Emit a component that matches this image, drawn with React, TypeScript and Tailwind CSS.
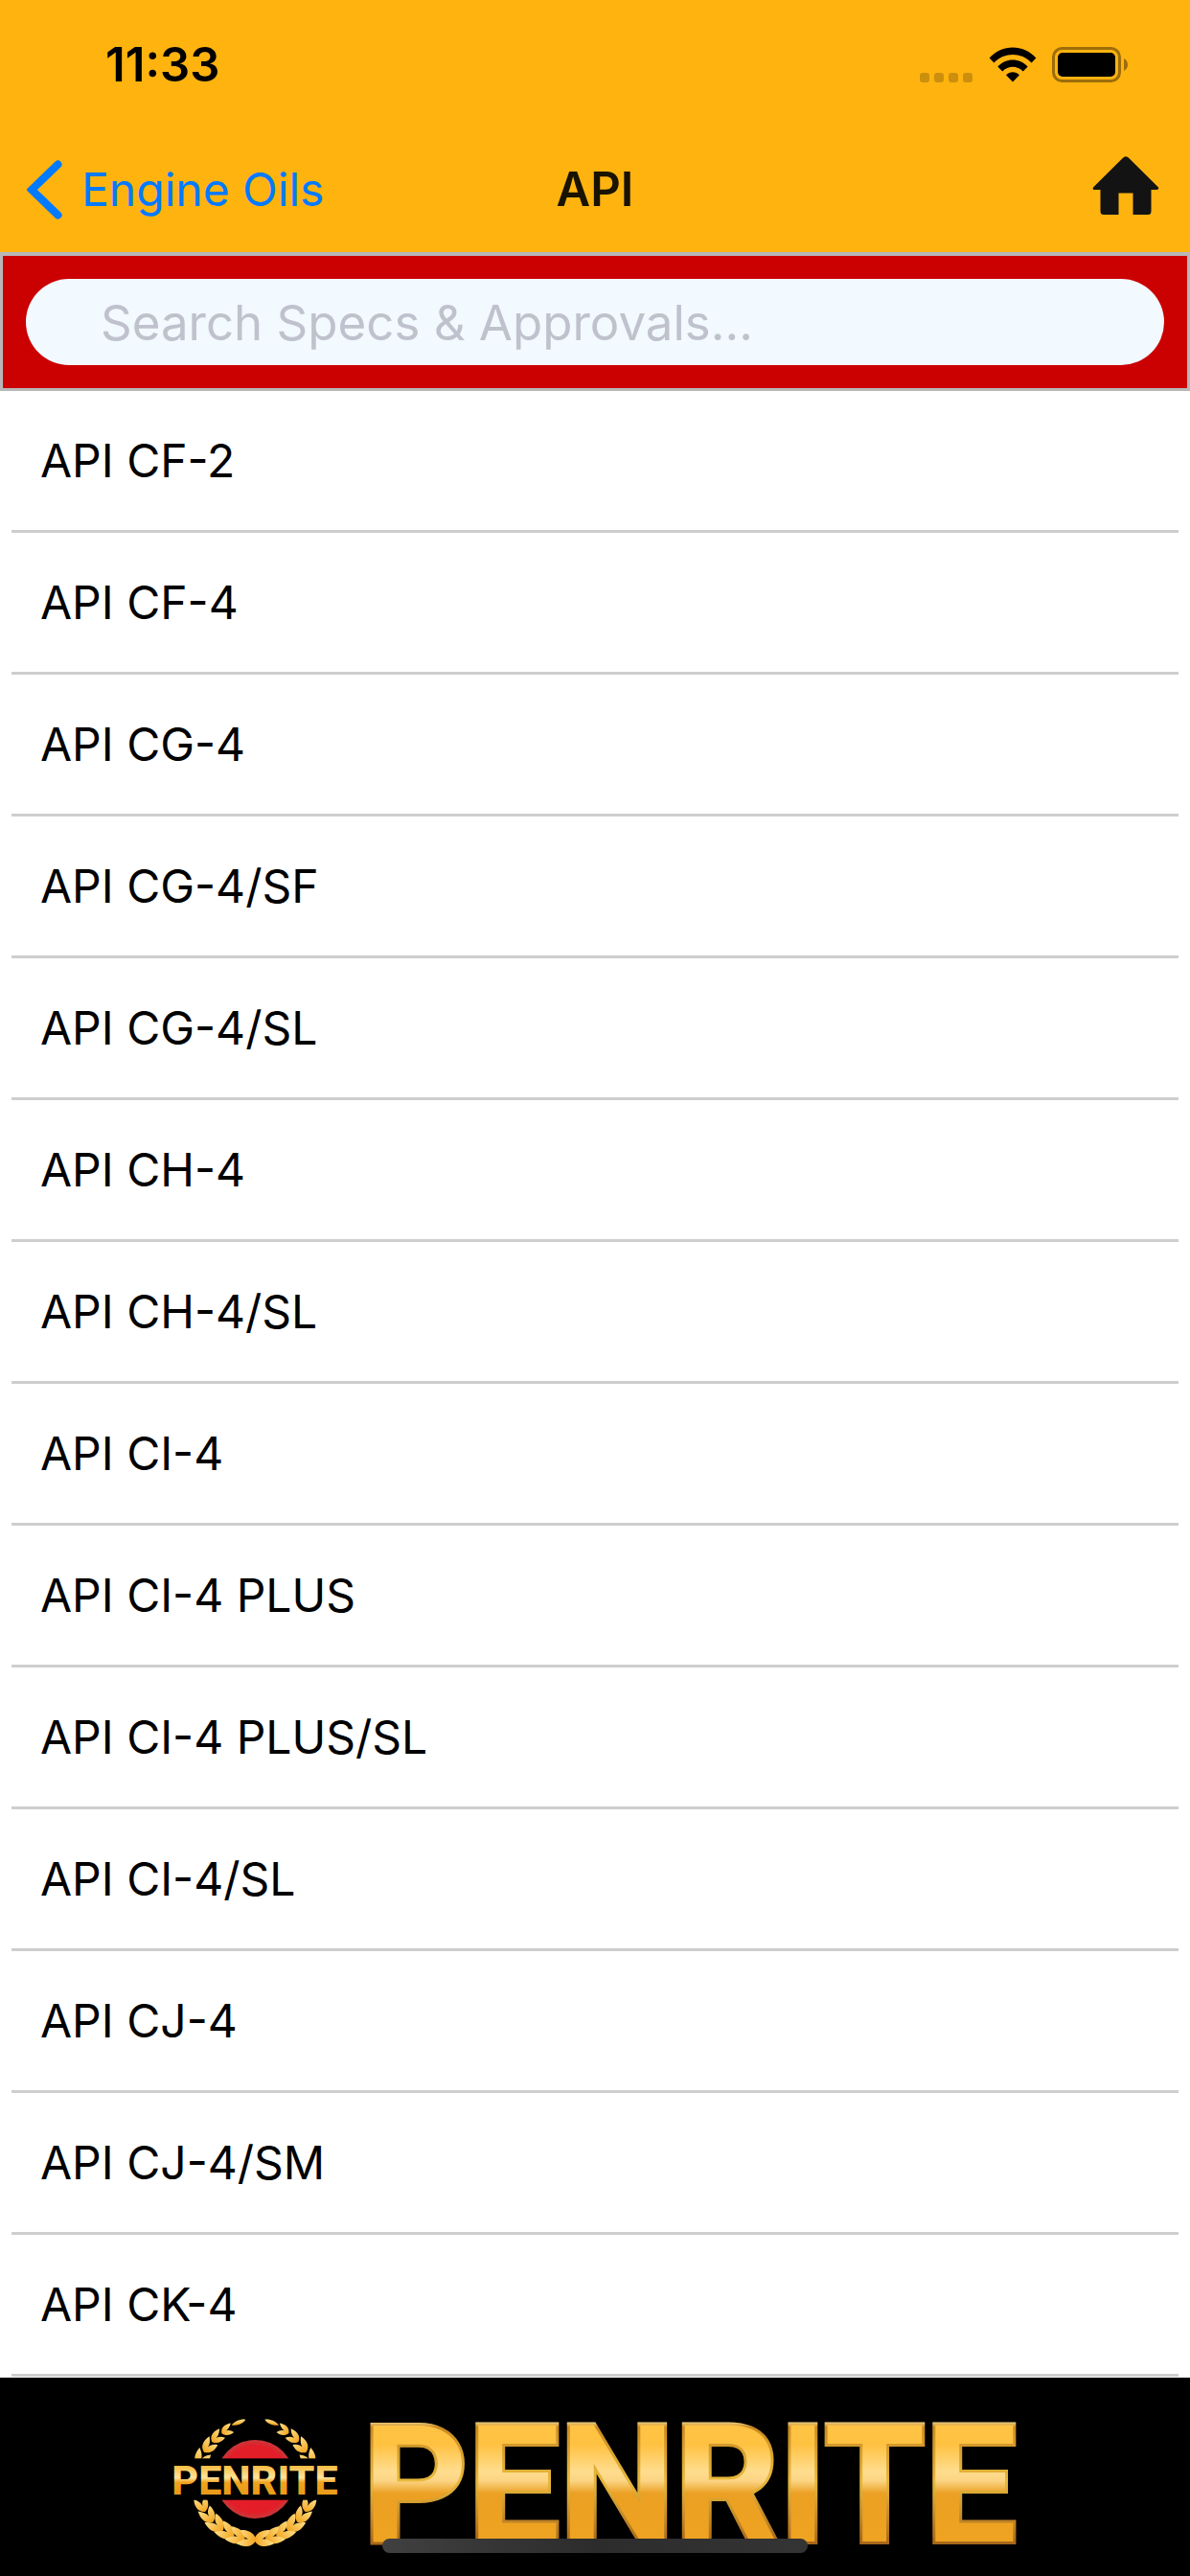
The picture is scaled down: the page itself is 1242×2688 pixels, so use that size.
import React, { useState } from 'react';

const SPECS = [
  'API CF-2',
  'API CF-4',
  'API CG-4',
  'API CG-4/SF',
  'API CG-4/SL',
  'API CH-4',
  'API CH-4/SL',
  'API CI-4',
  'API CI-4 PLUS',
  'API CI-4 PLUS/SL',
  'API CI-4/SL',
  'API CJ-4',
  'API CJ-4/SM',
  'API CK-4',
];

// angle around the wreath (degrees from the top) and leaf size
const LEAVES = [
  { angle: 29, size: 0.8 },
  { angle: 41, size: 0.9 },
  { angle: 53, size: 1 },
  { angle: 67, size: 1.1 },
  { angle: 114, size: 1 },
  { angle: 126, size: 1.1 },
  { angle: 138, size: 1.2 },
  { angle: 150, size: 1.2 },
  { angle: 161, size: 1.2 },
  { angle: 172, size: 1.2 },
];

function StatusBar() {
  return (
    <div className="flex h-[132px] items-center justify-between pt-1 pr-16 pl-[110px]">
      <span className="text-[49px] leading-[60px] font-semibold text-black">11:33</span>
      <div className="flex items-center">
        <svg width="56" height="38" viewBox="0 0 56 38" aria-hidden="true">
          {[0, 15, 30, 45].map(x => (
            <rect key={x} x={x} y="27" width="10" height="10" rx="3" fill="#cc8f0d" />
          ))}
        </svg>
        <svg className="ml-4" width="50" height="38" viewBox="0 0 50 38" aria-hidden="true">
          <path d="M0.6 11.6C14-3.2 36-3.2 49.4 11.6L44.6 16.4C33.5 5.2 16.5 5.2 5.4 16.4Z" />
          <path d="M9.3 20.6C18 11.2 32 11.2 40.7 20.6L35.7 25.4C29.5 19.2 20.5 19.2 14.3 25.4Z" />
          <path d="M18 29.2C21.8 25.2 28.2 25.2 32 29.2L25 36.5Z" />
        </svg>
        <svg className="ml-4" width="80" height="38" viewBox="0 0 80 38" aria-hidden="true">
          <rect x="1.5" y="1.5" width="69" height="34" rx="9" fill="none" stroke="#9c6d09" strokeWidth="3" />
          <rect x="6" y="6" width="60" height="25" rx="5" />
          <path d="M75 12C80.3 14.5 80.3 22.5 75 25Z" fill="#9c6d09" />
        </svg>
      </div>
    </div>
  );
}

function NavBar() {
  return (
    <div className="grid h-[131px] grid-cols-3 items-center px-7">
      <button type="button" className="flex items-center gap-5 justify-self-start text-[#007aff]">
        <svg width="37" height="62" viewBox="0 0 37 62" aria-hidden="true">
          <path d="M32.5 4.5L5 31L32.5 57.5" fill="none" stroke="currentColor" strokeWidth="8" strokeLinecap="round" />
        </svg>
        <span className="text-[48px] leading-[60px] whitespace-nowrap">Engine Oils</span>
      </button>
      <h1 className="text-center text-[49px] leading-[60px] font-semibold text-[#191300]">API</h1>
      <button type="button" aria-label="Home" className="justify-self-end pr-1 pb-2">
        <svg width="70" height="62" viewBox="0 0 70 62" aria-hidden="true">
          <path
            d="M32 1.8Q35-1.2 38 1.8L69 32.5Q70 35 67 35H61.5V57.5Q61.5 61 58 61H42.5V38.5H27.5V61H12Q8.5 61 8.5 57.5V35H2Q0 35 1 32.5Z"
            fill="#131313"
          />
        </svg>
      </button>
    </div>
  );
}

function Leaves() {
  return (
    <g fill="url(#leaf)">
      <path d="M292 165C280 162 258 168 248 183C268 184 284 178 292 165Z" />
      {LEAVES.map(({ angle, size }) => {
        const rad = (angle * Math.PI) / 180;
        const x = 322 - 182 * Math.sin(rad);
        const y = 358 - 182 * Math.cos(rad);
        return (
          <path
            key={angle}
            transform={`translate(${x} ${y}) rotate(${90 - angle}) scale(${size})`}
            d="M0 24C-20 17-25-2-17-26C-7-16-1-8 0 4C2-7 8-14 20-20C24-1 18 17 0 24Z"
          />
        );
      })}
    </g>
  );
}

function Emblem() {
  return (
    <svg className="overflow-visible" width="174" height="140" viewBox="60 148 522 420" role="img" aria-label="Penrite emblem">
      <defs>
        <linearGradient id="leaf" x1="0" y1="0" x2="0" y2="1">
          <stop offset="0" stopColor="#ffe08a" />
          <stop offset="1" stopColor="#f2a41e" />
        </linearGradient>
        <linearGradient id="gold" gradientUnits="userSpaceOnUse" x1="0" y1="302" x2="0" y2="402">
          <stop offset="0" stopColor="#f6b32e" />
          <stop offset="0.45" stopColor="#ffe59c" />
          <stop offset="0.6" stopColor="#f0a31f" />
          <stop offset="1" stopColor="#e89a18" />
        </linearGradient>
        <radialGradient id="disc">
          <stop offset="0.85" stopColor="#e31e28" />
          <stop offset="1" stopColor="#c8383a" />
        </radialGradient>
      </defs>
      <Leaves />
      <g transform="translate(644 0) scale(-1 1)">
        <Leaves />
      </g>
      <circle cx="322" cy="352" r="123" fill="url(#disc)" />
      <rect x="60" y="287" width="522" height="130" fill="#000" />
      <text x="321" y="399" textAnchor="middle" fontSize="129" className="font-[Roboto] font-extrabold" fill="url(#gold)">
        PENRITE
      </text>
    </svg>
  );
}

function Wordmark() {
  return (
    <svg className="overflow-visible" width="686" height="132" viewBox="0 0 686 132" role="img" aria-label="Penrite">
      <defs>
        <linearGradient id="face" gradientUnits="userSpaceOnUse" x1="0" y1="2" x2="0" y2="130">
          <stop offset="0" stopColor="#ffc445" />
          <stop offset="0.2" stopColor="#ffc140" />
          <stop offset="0.42" stopColor="#ffdd8e" />
          <stop offset="0.5" stopColor="#fbd483" />
          <stop offset="0.6" stopColor="#eba023" />
          <stop offset="1" stopColor="#efa321" />
        </linearGradient>
        <linearGradient id="edge" gradientUnits="userSpaceOnUse" x1="0" y1="2" x2="0" y2="130">
          <stop offset="0" stopColor="#fff0b0" />
          <stop offset="0.06" stopColor="#c98a22" />
          <stop offset="0.5" stopColor="#e8b93c" />
          <stop offset="1" stopColor="#a8681a" />
        </linearGradient>
      </defs>
      <text
        x="343"
        y="129"
        textAnchor="middle"
        fontSize="170"
        className="font-[Roboto] font-bold"
        fill="url(#face)"
        stroke="url(#edge)"
        strokeWidth="6"
        paintOrder="stroke"
      >
        PENRITE
      </text>
    </svg>
  );
}

export default function App() {
  const [query, setQuery] = useState('');
  const visible = SPECS.filter(spec => spec.toLowerCase().includes(query.toLowerCase()));

  return (
    <div className="flex min-h-screen flex-col bg-white font-[Inter,sans-serif] text-black">
      <header className="bg-[#ffb30f]">
        <StatusBar />
        <NavBar />
      </header>
      <form className="border-3 border-t-4 border-[#b8b8b8] bg-[#cb0000] p-6" onSubmit={e => e.preventDefault()}>
        <input
          type="text"
          aria-label="Search Specs & Approvals"
          value={query}
          onChange={e => setQuery(e.target.value)}
          placeholder="Search Specs & Approvals..."
          className="block h-[90px] w-full rounded-full bg-[#f2f9ff] px-[78px] text-[51px] placeholder:text-[#bfc2cd]"
        />
      </form>
      <ul className="mx-3 grow">
        {visible.map(spec => (
          <li key={spec} className="border-b-3 border-[#cecece]">
            <button type="button" className="block h-[145px] w-full px-[30px] text-left text-[48px]">
              {spec}
            </button>
          </li>
        ))}
      </ul>
      <footer className="relative flex h-[207px] items-center justify-center gap-6 bg-black pt-2">
        <Emblem />
        <Wordmark />
        <div className="absolute bottom-6 left-1/2 h-[15px] w-[444px] -translate-x-1/2 rounded-full bg-linear-to-r from-[#404040] via-[#2c2c2c] to-[#343434]" />
      </footer>
    </div>
  );
}
